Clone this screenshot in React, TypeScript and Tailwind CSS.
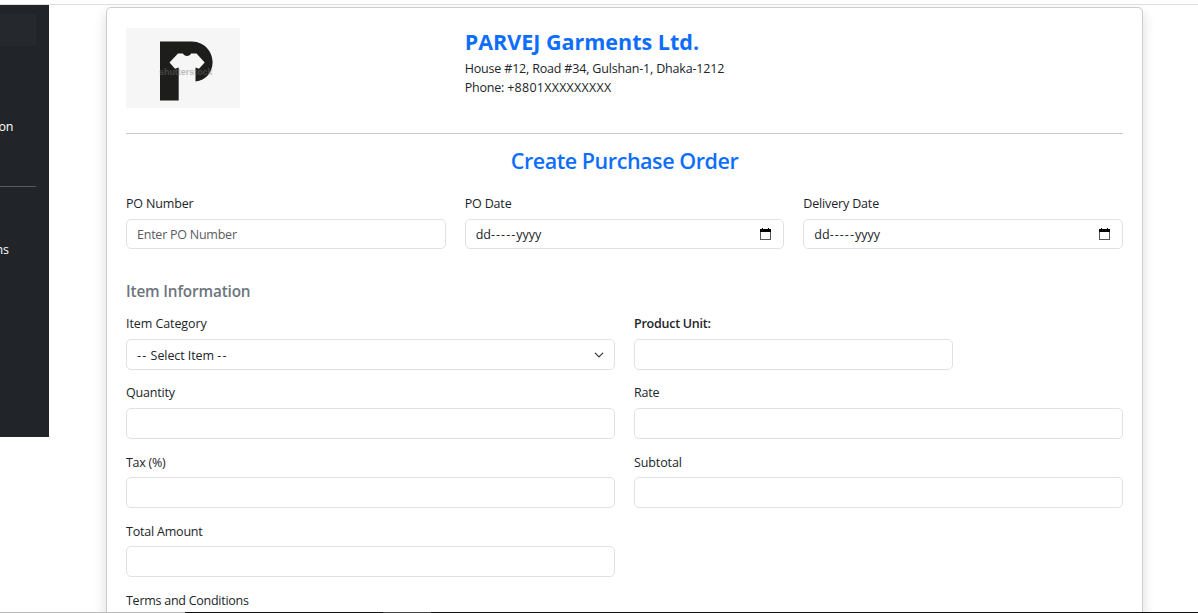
import type { ReactNode } from 'react';

function Label({ children, className = 'tracking-[-0.2px]' }: { children: ReactNode; className?: string }) {
  return <div className={`h-[20px] pt-px leading-[20px] whitespace-nowrap ${className}`}>{children}</div>;
}

function CalendarIcon() {
  return (
    <svg width="11" height="12" viewBox="0 0 11 12" fill="none" shapeRendering="crispEdges">
      <path d="M2 0h1v1h5V0h1v1h2v11H0V1h2z" fill="#555" />
      <path d="M2 0h1v1h5V0h1v1h2v3H0V1h2z" fill="#000" />
      <path d="M1 4h9v7H1z" fill="#fff" />
    </svg>
  );
}

function DateField({ label }: { label: string }) {
  return (
    <div>
      <Label className="tracking-[-0.16px]">{label}</Label>
      <div className="mt-[6px] flex h-[30px] items-center justify-between rounded-[5px] border border-[#dee2e6] pr-[12px] pl-[10px]">
        <span className="pt-[2px]">
          <span className="tracking-[0px]">dd</span>
          <span className="tracking-[1.05px]">-----</span>
          <span className="tracking-[0px]">yyyy</span>
        </span>
        <CalendarIcon />
      </div>
    </div>
  );
}

function Field({ label, labelClass = 'tracking-[-0.2px]', boxClass = 'w-full' }: { label: string; labelClass?: string; boxClass?: string }) {
  return (
    <div className="h-[69px]">
      <Label className={labelClass}>{label}</Label>
      <input aria-label={label} className={`mt-[6px] block h-[31px] rounded-[5px] border border-[#dee2e6] px-[10px] outline-none ${boxClass}`} />
    </div>
  );
}

function Logo() {
  return (
    <svg width="114" height="80" viewBox="0 0 114 80" className="block">
      <rect width="114" height="80" fill="#f6f6f6" />
      <path d="M34 13.500H66C79 14 86.600 24 86.600 34C86.600 44 80 52.500 69.500 53.600V39.500L73 40.700L78.700 34.500L70.500 25.500H65C64 28.800 58 28.800 57 25.500H52L43.500 34.500L49 40.700L52.700 39.500V72.600H34Z" fill="#1d1d1b" />
      <g opacity=".45">
        <text x="33" y="46.800" fontFamily="Liberation Sans, sans-serif" fontSize="9.500" fontWeight="700" textLength="53.500" lengthAdjust="spacingAndGlyphs" fill="#777">shutterstock</text>
      </g>
    </svg>
  );
}

export default function App() {
  return (
    <div className="relative flex h-[613px] flex-col overflow-hidden bg-white font-['Open_Sans','Noto_Sans',sans-serif] text-[12.5px] text-[#212529]">
      <div className="h-[5px] shrink-0 border-b border-[#dedede]" />
      <div className="flex min-h-0 flex-1 items-start overflow-hidden">
        <aside className="h-[432px] w-[49px] shrink-0 overflow-hidden bg-[#212529] pt-[9px] text-white">
          <div className="h-[32px] w-[36px] bg-[#25292d]" />
          <div className="mt-[71px] flex h-[20px] w-[13px] items-center justify-end leading-[20px] tracking-[-0.3px]">on</div>
          <div className="mt-[49px] h-px w-[36px] bg-[#595c5f]" />
          <div className="mt-[53px] flex h-[20px] w-[9px] items-center justify-end leading-[20px]">ns</div>
        </aside>
        <main className="mt-[2px] ml-[57px] h-[680px] w-[1037px] shrink-0 rounded-[5px] border border-[#cdcdcd] bg-white px-[19px] pt-[20px] shadow-[0_6px_13px_rgba(0,0,0,0.15)]">
          <header className="grid h-[105px] grid-cols-[319.700px_1fr] gap-[19px]">
            <Logo />
            <div>
              <h1 className="h-[31px] text-[21.500px] leading-[28px] font-bold whitespace-nowrap text-[#0d6efd]">PARVEJ Garments Ltd.</h1>
              <p className="h-[19px] leading-[19px] tracking-[-0.18px] whitespace-nowrap">House #12, Road #34, Gulshan-1, Dhaka-1212</p>
              <p className="h-[19px] leading-[19px] whitespace-nowrap"><span className="tracking-[-0.2px]">Phone: </span><span className="tracking-[0.25px]">+8801XXXXXXXXX</span></p>
            </div>
          </header>
          <div className="h-px bg-[#c8c9ca]" />
          <h2 className="mt-[13px] h-[28px] text-center text-[21.500px] leading-[28px] font-semibold tracking-[-0.45px] text-[#0d6efd]">Create Purchase Order</h2>
          <div className="mt-[18px] grid grid-cols-3 gap-[19px]">
            <div>
              <Label className="tracking-[-0.15px]">PO Number</Label>
              <input placeholder="Enter PO Number" className="mt-[6px] block h-[30px] w-full rounded-[5px] border border-[#dee2e6] px-[10px] tracking-[-0.24px] outline-none placeholder:text-[#595c5f]" />
            </div>
            <DateField label="PO Date" />
            <DateField label="Delivery Date" />
          </div>
          <h3 className="mt-[32px] h-[20px] text-[15.300px] leading-[20px] font-semibold tracking-[-0.15px] text-[#6c757d]">Item Information</h3>
          <div className="mt-[12px] grid grid-cols-2 gap-x-[19px]">
            <div className="h-[69px]">
              <Label className="tracking-[-0.08px]">Item Category</Label>
              <div className="mt-[6px] flex h-[31px] items-center justify-between rounded-[5px] border border-[#dee2e6] pr-[10px] pl-[10px]">
                <span className="pt-[2px] leading-[20px] tracking-[-0.08px]">
                  <span className="tracking-[1.2px]">--</span> Select Item <span className="tracking-[1.2px]">--</span>
                </span>
                <svg width="10" height="10" viewBox="0 0 16 16" fill="none" stroke="#343a40" strokeWidth="2" strokeLinecap="round" strokeLinejoin="round"><path d="m2 5 6 6 6-6" /></svg>
              </div>
            </div>
            <Field label="Product Unit:" labelClass="font-semibold tracking-[-0.25px]" boxClass="w-[319px]" />
            <Field label="Quantity" />
            <Field label="Rate" />
            <Field label="Tax (%)" labelClass="relative top-px tracking-[-0.28px]" />
            <Field label="Subtotal" labelClass="relative top-px tracking-[-0.12px]" />
            <Field label="Total Amount" labelClass="relative top-px tracking-[-0.2px]" />
          </div>
          <Label className="relative top-px tracking-[-0.26px]">Terms and Conditions</Label>
        </main>
      </div>
      <div className="absolute inset-x-0 bottom-0 flex h-px">
        <div className="w-[185px] bg-[#b9b9b9]" />
        <div className="w-[198px] bg-[#111]" />
        <div className="w-[48px] bg-[#444]" />
        <div className="flex-1 bg-[#111]" />
      </div>
    </div>
  );
}
